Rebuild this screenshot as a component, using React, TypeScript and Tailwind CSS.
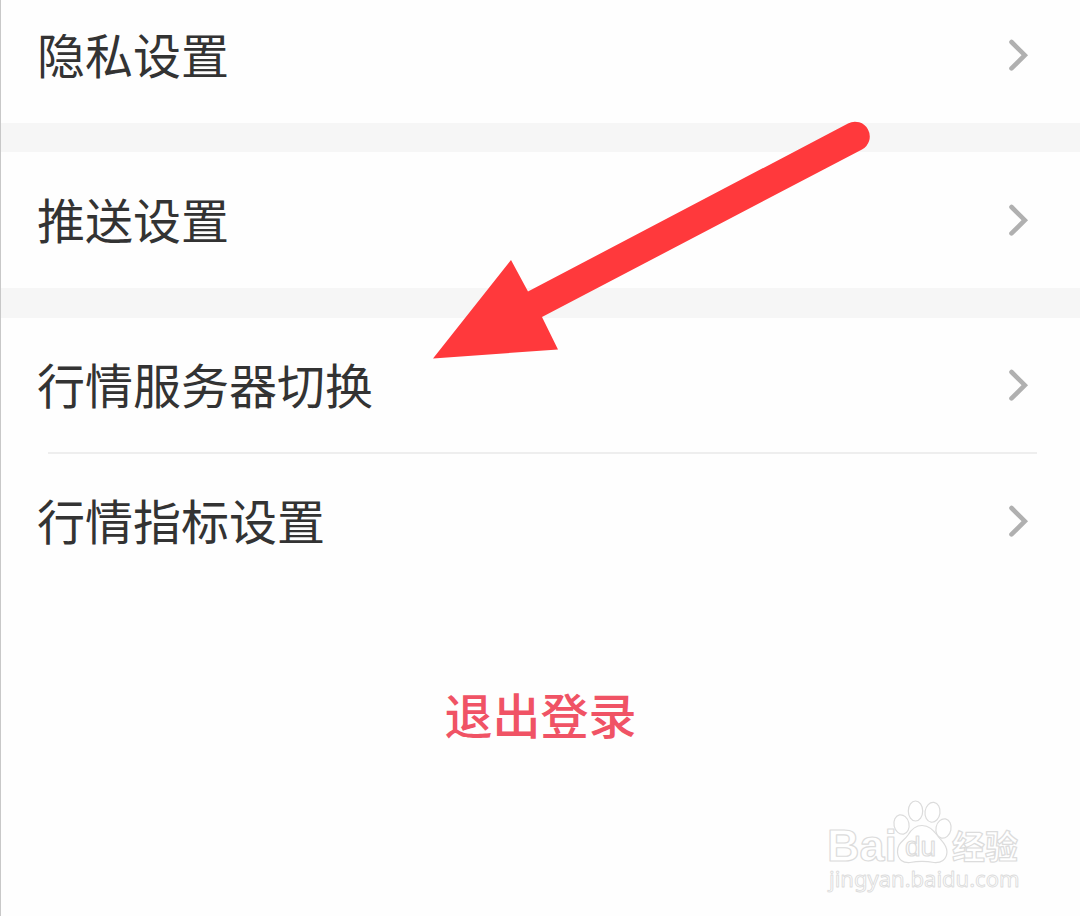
import React from 'react';

type RowProps = { label: string; spacing: string };

function SettingRow({ label, spacing }: RowProps) {
  return (
    <a href="#" className={`flex items-center justify-between pl-9 pr-[50px] ${spacing}`}>
      <span className="pb-1 text-[48px] leading-[68px]">{label}</span>
      <svg width="22" height="34" viewBox="0 0 22 34" fill="none" stroke="#b0b0b0" strokeWidth="4.6" strokeLinecap="round" strokeLinejoin="miter" aria-hidden="true">
        <path d="M3.500 4 16.800 17.200 3.500 30.400" />
      </svg>
    </a>
  );
}

function PointerArrow() {
  return (
    <svg className="pointer-events-none absolute left-[419px] top-[110px]" width="460" height="260" viewBox="0 0 460 260" aria-hidden="true">
      <path fill="#ff393c" d="M13 248.500 91 150 108 181.500 428 13.500A14.700 14.700 0 0 1 442 39.500L122 207 138 239.500Z" />
    </svg>
  );
}

function Watermark() {
  return (
    <svg width="230" height="120" viewBox="0 0 230 120" fill="#ffffff" stroke="#dcdcdc" strokeWidth="1.2" strokeLinejoin="round" aria-label="Baidu 经验">
      <text x="17" y="75" fontFamily="Liberation Sans, sans-serif" fontWeight="700" fontSize="45">Bai</text>
      <ellipse cx="91.500" cy="38.500" rx="7.500" ry="9.800" transform="rotate(-12 91.500 38.500)" />
      <ellipse cx="105.500" cy="25" rx="7.200" ry="10" />
      <ellipse cx="122.500" cy="26.300" rx="7.500" ry="10" transform="rotate(8 122.500 26.300)" />
      <ellipse cx="133.500" cy="42.500" rx="7.500" ry="9.800" transform="rotate(12 133.500 42.500)" />
      <path d="M112 39.500C105 39.500 101 44 98 49C94 55 87 57 87.500 66C88 74 93 77 100 76.500C108 75 116 75 124 76.500C131 77 136.500 74 137 66C137 58 131 55 127 49C123 44 119 39.500 112 39.500Z" />
      <text x="95" y="70" fontFamily="Liberation Sans, sans-serif" fontSize="28">du</text>
      <text x="142" y="73" fontFamily="Noto Sans CJK SC, sans-serif" fontWeight="700" fontSize="33">经验</text>
      <text x="19" y="101" fontFamily="Noto Sans, sans-serif" fontSize="22" strokeWidth="0.9">jingyan.baidu.com</text>
    </svg>
  );
}

export default function App() {
  return (
    <div className="relative flex min-h-screen flex-col border-l border-[#c8c8c8] bg-[#fefefe] font-['Noto_Sans_CJK_SC',sans-serif] text-[#333333]">
      <nav aria-label="设置">
        <SettingRow label="隐私设置" spacing="pt-[19px] pb-8" />
        <div className="h-[29px] bg-[#f6f6f6]" />
        <SettingRow label="推送设置" spacing="py-8" />
        <div className="h-[30px] bg-[#f6f6f6]" />
        <SettingRow label="行情服务器切换" spacing="py-[31px]" />
        <div className="ml-[47px] mr-[43px] h-[2px] bg-[#eeeeee]" />
        <SettingRow label="行情指标设置" spacing="py-[31px]" />
      </nav>
      <button type="button" className="mt-[89px] self-center px-8 text-[48px] font-medium leading-[72px] text-[#f05365]">退出登录</button>
      <div className="mt-auto flex justify-end pr-10 pb-[10px]">
        <Watermark />
      </div>
      <PointerArrow />
    </div>
  );
}
